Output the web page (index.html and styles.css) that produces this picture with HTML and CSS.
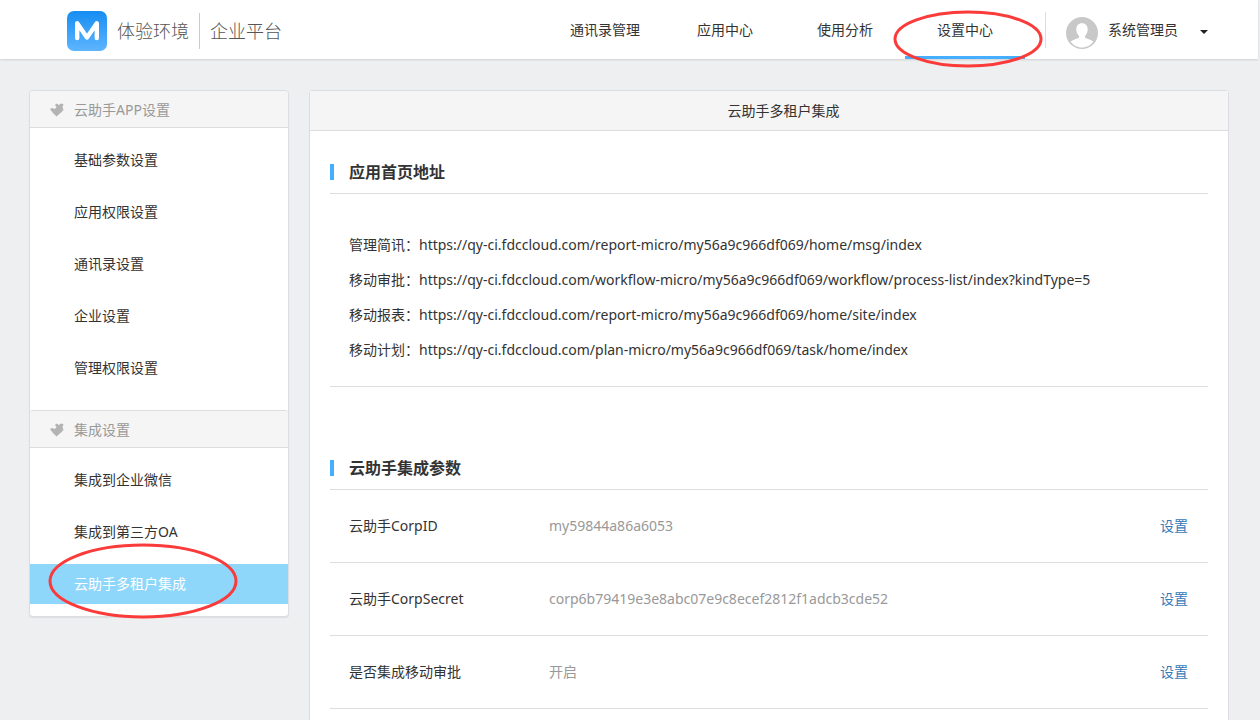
FILE: index.html
```html
<!DOCTYPE html>
<html lang="zh-CN">
<head>
<meta charset="utf-8">
<title>云助手多租户集成</title>
<link rel="stylesheet" href="styles.css">
</head>
<body>
<header class="topbar">
  <div class="brand">
    <svg class="logo" viewBox="0 0 40 40" aria-hidden="true">
      <defs><linearGradient id="logoFill" x1="0" y1="0" x2="0" y2="1"><stop offset="0" stop-color="#168df2"/><stop offset="1" stop-color="#5eb5ff"/></linearGradient></defs>
      <rect width="40" height="40" rx="7" fill="url(#logoFill)"/>
      <path d="M10.200 27V12.200L20 26.500L29.800 12.200V27" fill="none" stroke="#fff" stroke-width="4.400" stroke-linecap="round" stroke-linejoin="round"/>
    </svg>
    <span class="brand-name">体验环境</span>
    <span class="brand-sub">企业平台</span>
  </div>
  <nav class="main-nav">
    <a class="nav-link" href="#">通讯录管理</a>
    <a class="nav-link" href="#">应用中心</a>
    <a class="nav-link" href="#">使用分析</a>
    <a class="nav-link is-active" href="#">设置中心
      <svg class="mark mark-nav" viewBox="0 0 150 58" aria-hidden="true"><ellipse cx="75" cy="29" rx="73" ry="27"/></svg>
    </a>
  </nav>
  <button class="user" type="button">
    <svg class="avatar" viewBox="0 0 32 32" aria-hidden="true">
      <circle cx="16" cy="16" r="16" fill="#c8c8c8"/>
      <path d="M16 6.200C12.500 6.200 10.300 8.700 10.300 12.300C10.300 15 11.400 17.600 13 19V20.800C11 22 7.500 22.400 4.600 24.600C7 28.300 11.300 30.600 16 30.600S25 28.300 27.400 24.600C24.500 22.400 21 22 19 20.800V19C20.600 17.600 21.700 15 21.700 12.300C21.700 8.700 19.500 6.200 16 6.200Z" fill="#fff"/>
    </svg>
    <span class="user-name">系统管理员</span>
    <span class="caret"></span>
  </button>
</header>

<div class="page">
  <aside class="sidebar">
    <section class="group">
      <h2 class="group-title">
        <svg class="group-icon" viewBox="0 0 14 14" aria-hidden="true"><path d="M0 6L2 5L5 6L6.500 4L5 2L6.500 .5L9 2L11 .5L13.500 1L12.500 4L13.500 7L10.500 10L6.500 13.500L2.500 9.500Z"/></svg>
        云助手APP设置
      </h2>
      <ul class="menu">
        <li><a class="menu-link" href="#">基础参数设置</a></li>
        <li><a class="menu-link" href="#">应用权限设置</a></li>
        <li><a class="menu-link" href="#">通讯录设置</a></li>
        <li><a class="menu-link" href="#">企业设置</a></li>
        <li><a class="menu-link" href="#">管理权限设置</a></li>
      </ul>
    </section>
    <section class="group">
      <h2 class="group-title">
        <svg class="group-icon" viewBox="0 0 14 14" aria-hidden="true"><path d="M0 6L2 5L5 6L6.500 4L5 2L6.500 .5L9 2L11 .5L13.500 1L12.500 4L13.500 7L10.500 10L6.500 13.500L2.500 9.500Z"/></svg>
        集成设置
      </h2>
      <ul class="menu">
        <li><a class="menu-link" href="#">集成到企业微信</a></li>
        <li><a class="menu-link" href="#">集成到第三方OA</a></li>
        <li><a class="menu-link is-current" href="#">云助手多租户集成
          <svg class="mark mark-menu" viewBox="0 0 190 77" aria-hidden="true"><ellipse cx="95" cy="38" rx="93" ry="36"/></svg>
        </a></li>
      </ul>
    </section>
  </aside>

  <main class="panel">
    <h1 class="panel-title">云助手多租户集成</h1>
    <section class="block">
      <h2 class="block-title">应用首页地址</h2>
      <ul class="urls">
        <li>管理简讯：https://qy-ci.fdccloud.com/report-micro/my56a9c966df069/home/msg/index</li>
        <li>移动审批：https://qy-ci.fdccloud.com/workflow-micro/my56a9c966df069/workflow/process-list/index?kindType=5</li>
        <li>移动报表：https://qy-ci.fdccloud.com/report-micro/my56a9c966df069/home/site/index</li>
        <li>移动计划：https://qy-ci.fdccloud.com/plan-micro/my56a9c966df069/task/home/index</li>
      </ul>
    </section>
    <section class="block">
      <h2 class="block-title">云助手集成参数</h2>
      <dl class="params">
        <div class="param"><dt>云助手CorpID</dt><dd>my59844a86a6053</dd><dd class="param-edit"><a href="#">设置</a></dd></div>
        <div class="param"><dt>云助手CorpSecret</dt><dd>corp6b79419e3e8abc07e9c8ecef2812f1adcb3cde52</dd><dd class="param-edit"><a href="#">设置</a></dd></div>
        <div class="param"><dt>是否集成移动审批</dt><dd>开启</dd><dd class="param-edit"><a href="#">设置</a></dd></div>
      </dl>
    </section>
  </main>
</div>
</body>
</html>
```
FILE: styles.css
```css
* { box-sizing: border-box; }
body {
  display: flex;
  flex-direction: column;
  min-height: 100vh;
  margin: 0;
  padding-right: 2px;
  background: #edeff1;
  color: #333;
  font: 14px/20px "Noto Sans", "Noto Sans CJK SC", sans-serif;
}
h1, h2, ul, dl, dd { margin: 0; padding: 0; font-size: 14px; font-weight: 400; }
ul { list-style: none; }
a { color: inherit; text-decoration: none; }

.topbar {
  display: flex;
  height: 59px;
  padding: 0 50px 0 67px;
  background: #fff;
  box-shadow: 0 1px 2px #cfd1d4;
}
.brand { display: flex; align-items: center; padding-top: 2px; color: #555; font-size: 18px; font-weight: 300; }
.logo { width: 40px; height: 40px; margin-right: 10px; }
.brand-sub { margin-left: 10px; padding-left: 10px; border-left: 1px solid #ccc; line-height: 36px; }
.main-nav { display: flex; margin-left: auto; }
.nav-link { position: relative; width: 120px; padding-top: 20px; text-align: center; white-space: nowrap; }
.is-active { border-bottom: 3px solid #46aefe; }
.mark { position: absolute; fill: none; stroke: #fb3a3a; stroke-width: 3; pointer-events: none; }
.mark-nav { left: -12px; top: 10px; width: 150px; height: 58px; z-index: 1; }
.mark-menu { left: 18px; top: -21px; width: 190px; height: 77px; }
.user {
  display: flex;
  align-items: center;
  height: 36px;
  margin: 12px 0 0 20px;
  padding: 0 0 0 20px;
  border: 0;
  border-left: 1px solid #ddd;
  background: none;
  color: inherit;
  font: inherit;
}
.avatar { width: 32px; height: 32px; margin: 5px 10px 0 0; }
.caret { margin: 3px 0 0 22px; border: 4px solid transparent; border-top-color: #222; border-bottom: 0; }

.page { display: flex; flex: 1; align-items: flex-start; gap: 20px; padding: 31px 29px 0; }
.sidebar { width: 260px; padding-bottom: 12px; border: 1px solid #dcdde0; border-radius: 4px; background: #fff; box-shadow: 0 1px 1px #dcdde0; }
.group-title { display: flex; align-items: center; height: 37px; padding: 2px 0 0 20px; border-bottom: 1px solid #ddd; border-radius: 3px 3px 0 0; background: #f5f5f5; color: #999; }
.group + .group .group-title { height: 38px; margin-top: 22px; border-top: 1px solid #ddd; }
.group-icon { width: 14px; height: 14px; margin-right: 10px; fill: #b3b3b3; }
.menu { display: grid; gap: 12px; padding-top: 12px; }
.menu-link { display: block; position: relative; height: 40px; padding-left: 44px; line-height: 40px; }
.is-current { background: #8fd6fb; color: #fff; }

.panel { flex: 1; align-self: stretch; border: 1px solid #dcdde0; border-bottom: 0; border-radius: 4px 4px 0 0; background: #fff; }
.panel-title { height: 40px; padding-left: 29px; border-bottom: 1px solid #ddd; background: #f5f5f5; line-height: 40px; text-align: center; }
.block { margin: 0 20px; }
.block-title { display: flex; align-items: center; height: 63px; padding-top: 20px; border-bottom: 1px solid #ddd; font-size: 16px; font-weight: 700; }
.block-title::before { content: ""; width: 4px; height: 16px; margin-right: 15px; background: #46aefe; }
.urls { margin-bottom: 40px; padding: 33px 19px 19px; border-bottom: 1px solid #ddd; line-height: 35px; }
.param { display: flex; align-items: center; height: 73px; padding: 0 20px 0 19px; border-bottom: 1px solid #ddd; }
.param dt { width: 200px; }
.param dd { color: #999; }
.param .param-edit { margin-left: auto; color: #337ab7; }
```
